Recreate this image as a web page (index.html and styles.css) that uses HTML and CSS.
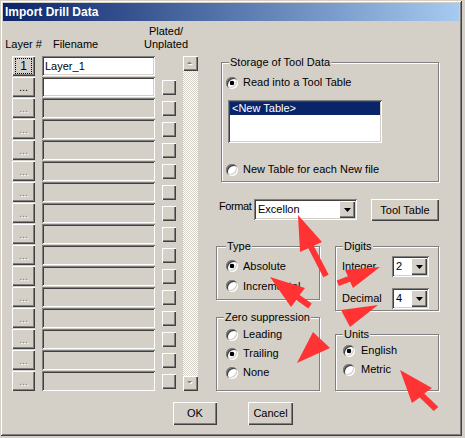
FILE: index.html
```html
<!DOCTYPE html>
<html>
<head>
<meta charset="utf-8">
<title>Import Drill Data</title>
<link rel="stylesheet" href="styles.css">
</head>
<body>
<div class="window">
  <div class="titlebar">Import Drill Data</div>
  <div class="main">
    <div class="layers">
      <div class="hdr hdr-layer">Layer #</div>
      <div class="hdr hdr-file">Filename</div>
      <div class="hdr hdr-plated">Plated/<br>Unplated</div>
      <div class="scrollbar">
        <div class="sb-btn raised"><svg width="7" height="5" viewBox="0 0 7 5"><polygon points="1,4 6,4 3.5,1.5" fill="#fff"/><polygon points="0,3 5,3 2.5,0.5" fill="#808080"/></svg></div>
        <div class="sb-track"></div>
        <div class="sb-btn raised"><svg width="7" height="5" viewBox="0 0 7 5"><polygon points="1,1 6,1 3.5,3.5" fill="#fff"/><polygon points="0,0 5,0 2.5,2.5" fill="#808080"/></svg></div>
      </div>

      <div class="lbtn raised"><span class="focus-rect">1</span></div>
      <div class="field sunken">Layer_1</div>
      <span class="nochk"></span>

      <div class="lbtn raised">...</div>
      <div class="field sunken"></div>
      <span class="chk raised"></span>

      <div class="lbtn raised dis">...</div><div class="field sunken dis"></div><span class="chk raised"></span>
      <div class="lbtn raised dis">...</div><div class="field sunken dis"></div><span class="chk raised"></span>
      <div class="lbtn raised dis">...</div><div class="field sunken dis"></div><span class="chk raised"></span>
      <div class="lbtn raised dis">...</div><div class="field sunken dis"></div><span class="chk raised"></span>
      <div class="lbtn raised dis">...</div><div class="field sunken dis"></div><span class="chk raised"></span>
      <div class="lbtn raised dis">...</div><div class="field sunken dis"></div><span class="chk raised"></span>
      <div class="lbtn raised dis">...</div><div class="field sunken dis"></div><span class="chk raised"></span>
      <div class="lbtn raised dis">...</div><div class="field sunken dis"></div><span class="chk raised"></span>
      <div class="lbtn raised dis">...</div><div class="field sunken dis"></div><span class="chk raised"></span>
      <div class="lbtn raised dis">...</div><div class="field sunken dis"></div><span class="chk raised"></span>
      <div class="lbtn raised dis">...</div><div class="field sunken dis"></div><span class="chk raised"></span>
      <div class="lbtn raised dis">...</div><div class="field sunken dis"></div><span class="chk raised"></span>
      <div class="lbtn raised dis">...</div><div class="field sunken dis"></div><span class="chk raised"></span>
      <div class="lbtn raised dis">...</div><div class="field sunken dis"></div><span class="chk raised"></span>
    </div>

    <div class="right">
      <fieldset class="storage">
        <legend class="lg-storage">Storage of Tool Data</legend>
        <div class="radio-row"><span class="radio on"></span><span>Read into a Tool Table</span></div>
        <div class="listbox sunken"><div class="sel">&lt;New Table&gt;</div></div>
        <div class="radio-row second"><span class="radio"></span><span>New Table for each New file</span></div>
      </fieldset>

      <div class="format-row">
        <span class="fmt-label">Format</span>
        <div class="combo sunken">
          <span class="combo-text">Excellon</span>
          <span class="combo-btn raised"><svg width="7" height="4" viewBox="0 0 7 4"><polygon points="0,0 7,0 3.5,4" fill="#000"/></svg></span>
        </div>
        <div class="btn raised tool-table">Tool Table</div>
      </div>

      <div class="groups">
        <div class="col">
          <fieldset class="type">
            <legend>Type</legend>
            <div class="radio-row r20"><span class="radio on"></span><span>Absolute</span></div>
            <div class="radio-row r20"><span class="radio"></span><span>Incremental</span></div>
          </fieldset>
          <fieldset class="zero">
            <legend class="lg-zero">Zero suppression</legend>
            <div class="radio-row r19"><span class="radio"></span><span>Leading</span></div>
            <div class="radio-row r19"><span class="radio on"></span><span>Trailing</span></div>
            <div class="radio-row r19"><span class="radio"></span><span>None</span></div>
          </fieldset>
        </div>
        <div class="col">
          <fieldset class="digits">
            <legend class="lg-digits">Digits</legend>
            <div class="digit-row">
              <span class="digit-label">Integer</span>
              <div class="combo small sunken">
                <span class="combo-text">2</span>
                <span class="combo-btn raised"><svg width="7" height="4" viewBox="0 0 7 4"><polygon points="0,0 7,0 3.5,4" fill="#000"/></svg></span>
              </div>
            </div>
            <div class="digit-row second">
              <span class="digit-label">Decimal</span>
              <div class="combo small sunken">
                <span class="combo-text">4</span>
                <span class="combo-btn raised"><svg width="7" height="4" viewBox="0 0 7 4"><polygon points="0,0 7,0 3.5,4" fill="#000"/></svg></span>
              </div>
            </div>
          </fieldset>
          <fieldset class="units">
            <legend>Units</legend>
            <div class="radio-row r19 wide"><span class="radio on"></span><span>English</span></div>
            <div class="radio-row r19 wide"><span class="radio"></span><span>Metric</span></div>
          </fieldset>
        </div>
      </div>
    </div>
  </div>

  <div class="footer">
    <div class="btn raised ok">OK</div>
    <div class="btn raised cancel">Cancel</div>
  </div>
</div>

<svg class="arrows" width="465" height="438" viewBox="0 0 465 438">
  <g fill="#ff3333">
    <polygon points="298,215 322,242 313.7,245.7 328.7,274.7 323.3,277.3 308.3,248.3 300,252"/>
    <polygon points="270,277 305,288 299.7,295 311.7,303.5 308.3,308.5 296.3,300 291,307"/>
    <polygon points="380,267 345,270 347.9,276.2 336.7,280.5 338.9,286.1 350.1,281.8 353,288"/>
    <polygon points="378,305 341,310 350,327"/>
    <polygon points="313,332 330,348 297,363"/>
    <polygon points="400,370 432,388 424.3,393.5 438.3,407 433.7,411 419.7,397.5 412,403"/>
  </g>
</svg>
</body>
</html>
```

FILE: styles.css
```css
* { box-sizing: border-box; }

body {
  margin: 0;
  background: #d4d0c8;
  font-family: "Liberation Sans", Arial, sans-serif;
  font-size: 11px;
  line-height: 13px;
  color: #000;
}

.raised {
  background: #d4d0c8;
  box-shadow: inset 1px 1px #fff, inset -1px -1px #404040, inset -2px -2px #808080;
}

.sunken {
  background: #fff;
  box-shadow: inset 1px 1px #808080, inset -1px -1px #fff, inset 2px 2px #404040, inset -2px -2px #d4d0c8;
}

.window {
  width: 462px;
  height: 436px;
  padding: 3px;
  background: #d4d0c8;
  box-shadow: inset 1px 1px #d4d0c8, inset -1px -1px #404040, inset 2px 2px #fff, inset -2px -2px #808080;
}

.titlebar {
  height: 18px;
  padding-left: 2px;
  background: linear-gradient(to right, #0a246a, #a6caf0);
  color: #fff;
  font-weight: bold;
  font-size: 12px;
  line-height: 18px;
}

.main {
  display: flex;
  align-items: flex-start;
}

/* ---------- left: layer list ---------- */
.layers {
  margin-left: 9px;
  display: grid;
  grid-template-columns: 23px 113px 14px 15px;
  grid-template-rows: 34px repeat(16, 20px);
  column-gap: 7px;
  row-gap: 1px;
}

.hdr {
  align-self: end;
  padding-bottom: 4px;
  text-align: center;
  white-space: nowrap;
}

.hdr-layer { margin: 0 -12px; }
.hdr-file { text-align: left; padding-left: 11px; }
.hdr-plated { margin: 0 -22px 0 -28px; }

.scrollbar {
  grid-column: 4;
  grid-row: 2 / span 16;
  display: flex;
  flex-direction: column;
}

.sb-btn {
  flex: none;
  height: 15px;
  display: flex;
  align-items: center;
  justify-content: center;
}

.sb-track {
  flex: 1;
  background: repeating-conic-gradient(#fff 0 25%, #d4d0c8 0 50%) 0 0 / 2px 2px;
}

.lbtn {
  grid-column: 1;
  display: flex;
  align-items: center;
  justify-content: center;
}

.lbtn.dis {
  color: #808080;
  text-shadow: 1px 1px #fff;
}

.focus-rect {
  width: 17px;
  height: 16px;
  border: 1px dotted #000;
  display: flex;
  align-items: center;
  justify-content: center;
  font-size: 12px;
}

.field {
  padding: 0 3px;
  line-height: 20px;
  white-space: nowrap;
  overflow: hidden;
}

.field.dis { background: #d4d0c8; }

.chk {
  align-self: center;
  height: 15px;
}

/* ---------- right side ---------- */
.right {
  margin-left: 18px;
  padding-top: 35px;
  width: 223px;
}

fieldset {
  margin: 0;
  min-width: 0;
  border: 1px solid #808080;
  box-shadow: inset 1px 1px #fff, 1px 1px #fff;
}

legend {
  padding: 0 1px;
  background: #d4d0c8;
  line-height: 13px;
}

.lg-storage { margin-left: 3px; }
.lg-digits { margin-left: 1px; }
.lg-zero { margin-left: -2px; }

.radio-row {
  display: flex;
  align-items: center;
  gap: 5px;
  height: 13px;
  white-space: nowrap;
}

.radio-row.r20 { height: 20px; }
.radio-row.r19 { height: 19px; }
.radio-row.wide { gap: 6px; }

.radio {
  flex: none;
  width: 12px;
  height: 12px;
  border-radius: 50%;
  background: #fff;
  box-shadow: inset 1px 1px #808080, inset -1px -1px #fff, inset 2px 2px #404040, inset -2px -2px #d4d0c8;
}

.radio.on {
  background: radial-gradient(circle, #000 0 2px, #fff 2.6px);
}

.storage {
  margin-left: 5px;
  width: 218px;
  padding: 7px 0 5px 4px;
}

.listbox {
  margin: 11px 0 0 2px;
  width: 154px;
  height: 43px;
  padding: 2px;
}

.listbox .sel {
  background: #0a246a;
  color: #fff;
  padding-left: 2px;
  line-height: 13px;
}

.storage .radio-row.second { margin-top: 20px; }

.format-row {
  display: flex;
  align-items: flex-start;
  margin-top: 17px;
  padding-left: 3px;
}

.fmt-label {
  width: 35px;
  margin-top: 1px;
  letter-spacing: -0.4px;
  white-space: nowrap;
}

.combo {
  width: 103px;
  height: 21px;
  padding: 2px;
  display: flex;
}

.combo.small { width: 37px; }

.combo-text {
  flex: 1;
  padding-left: 2px;
  line-height: 17px;
}

.combo-btn {
  flex: none;
  width: 16px;
  height: 17px;
  display: flex;
  align-items: center;
  justify-content: center;
}

.btn {
  height: 23px;
  display: flex;
  align-items: center;
  justify-content: center;
}

.tool-table {
  margin-left: 14px;
  width: 68px;
  height: 22px;
}

.groups {
  display: flex;
  align-items: flex-start;
  gap: 15px;
  margin-top: 19px;
}

.col {
  display: flex;
  flex-direction: column;
  width: 104px;
}

.type { padding: 3px 0 3px 9px; }
.zero { margin-top: 11px; padding: 1px 0 8px 9px; }
.digits { padding: 3px 0 1px 6px; }
.units { margin-top: 17px; padding: 0 0 11px 7px; }

.digit-row {
  display: flex;
  align-items: center;
}

.digit-row.second { margin-top: 11px; }

.digit-label { width: 50px; }

/* ---------- footer ---------- */
.footer {
  display: flex;
  justify-content: center;
  gap: 31px;
  margin-top: 11px;
  padding-left: 4px;
}

.ok { width: 44px; }
.cancel { width: 45px; }

/* ---------- annotation overlay ---------- */
.arrows {
  position: absolute;
  left: 0;
  top: 0;
  pointer-events: none;
}
```
